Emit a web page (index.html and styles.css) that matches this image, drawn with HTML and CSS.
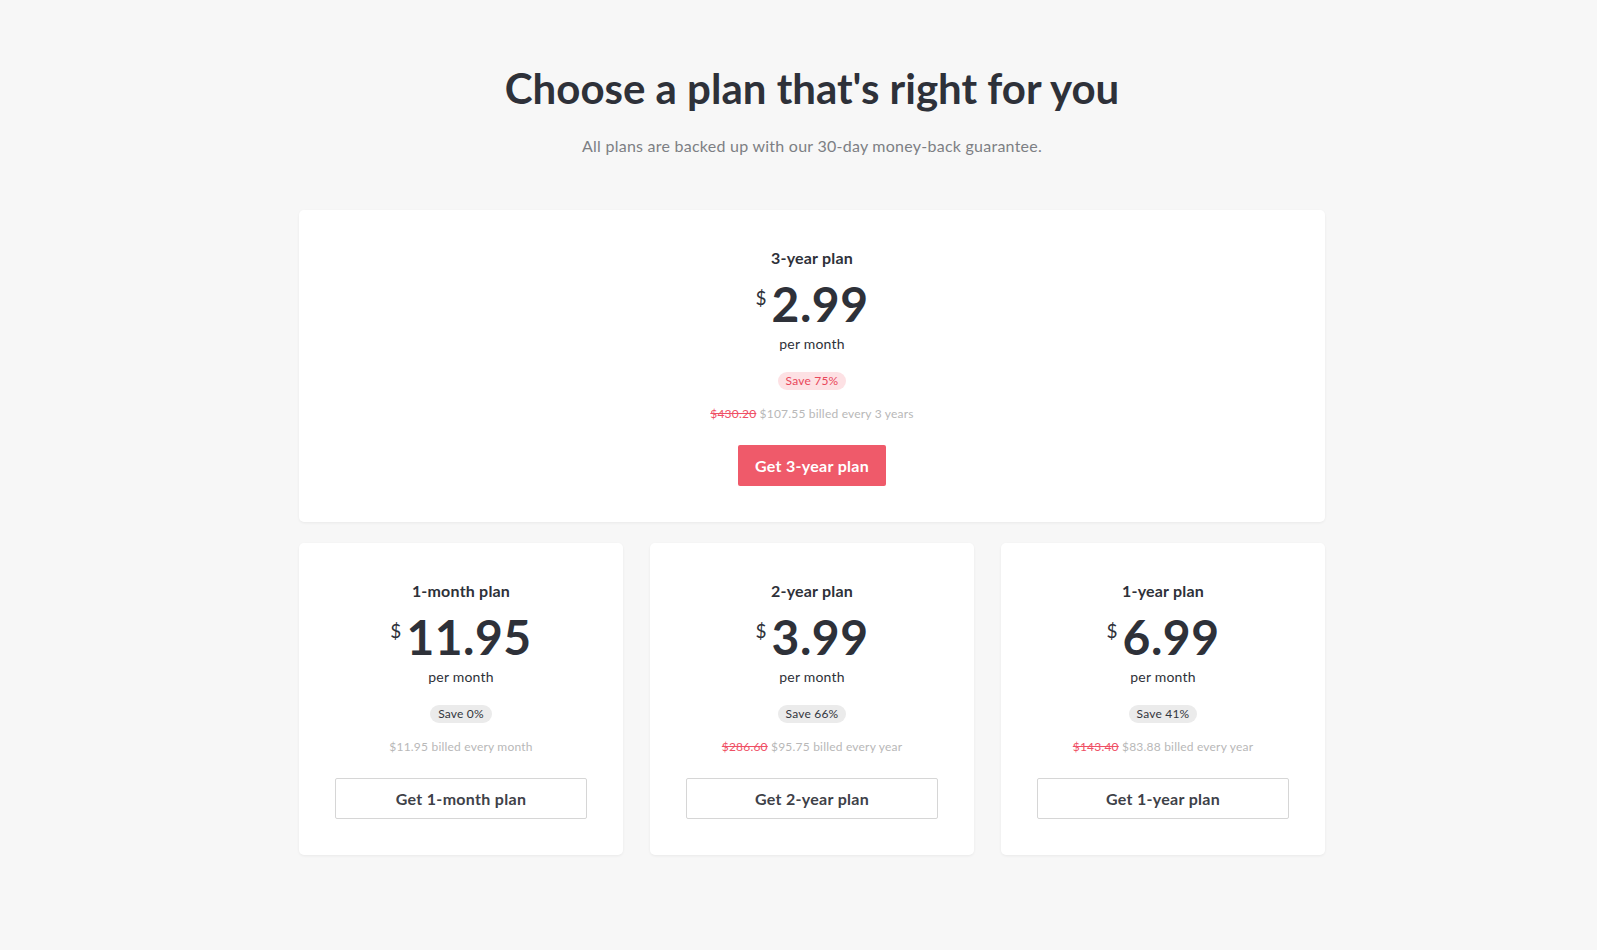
FILE: index.html
```html
<!DOCTYPE html>
<html lang="en">
<head>
    <meta charset="UTF-8">
    <meta name="viewport" content="width=device-width, initial-scale=1.0">
    <title>Choose a plan</title>
    <link rel="stylesheet" href="styles.css">
</head>
<body>
    <div class="page">
        <header class="intro">
            <h1>Choose a plan that's right for you</h1>
            <p class="subtitle">All plans are backed up with our 30-day money-back guarantee.</p>
        </header>

        <div class="plans">
            <div class="plan-card featured">
                <h3 class="plan-name">3-year plan</h3>
                <div class="price"><span class="currency">$</span>2.99</div>
                <p class="per-month">per month</p>
                <span class="badge badge-hot">Save 75%</span>
                <p class="billing"><s class="old-price">$430.20</s> $107.55 billed every 3 years</p>
                <button class="btn btn-primary">Get 3-year plan</button>
            </div>

            <div class="plan-row">
                <div class="plan-card">
                    <h3 class="plan-name">1-month plan</h3>
                    <div class="price"><span class="currency">$</span>11.95</div>
                    <p class="per-month">per month</p>
                    <span class="badge">Save 0%</span>
                    <p class="billing">$11.95 billed every month</p>
                    <button class="btn btn-outline">Get 1-month plan</button>
                </div>
                <div class="plan-card">
                    <h3 class="plan-name">2-year plan</h3>
                    <div class="price"><span class="currency">$</span>3.99</div>
                    <p class="per-month">per month</p>
                    <span class="badge">Save 66%</span>
                    <p class="billing"><s class="old-price">$286.60</s> $95.75 billed every year</p>
                    <button class="btn btn-outline">Get 2-year plan</button>
                </div>
                <div class="plan-card">
                    <h3 class="plan-name">1-year plan</h3>
                    <div class="price"><span class="currency">$</span>6.99</div>
                    <p class="per-month">per month</p>
                    <span class="badge">Save 41%</span>
                    <p class="billing"><s class="old-price">$143.40</s> $83.88 billed every year</p>
                    <button class="btn btn-outline">Get 1-year plan</button>
                </div>
            </div>
        </div>
    </div>
</body>
</html>
```

FILE: styles.css
```css
body {
    margin: 0;
    background-color: #f7f7f7;
    font-family: 'Lato', 'Noto Sans', Arial, sans-serif;
    color: #2e3139;
}
.page {
    padding: 60px 0 80px 27px;
}
.intro {
    text-align: center;
}
h1 {
    margin: 0;
    font-size: 42px;
    line-height: 56px;
    font-weight: 700;
    color: #2e3139;
}
.subtitle {
    margin: 18px 0 0;
    font-size: 16px;
    line-height: 24px;
    letter-spacing: 0.25px;
    color: #7d7f84;
}
.plans {
    width: 1026px;
    margin: 52px auto 0;
}
.plan-row {
    display: grid;
    grid-template-columns: repeat(3, 1fr);
    gap: 27px;
    margin-top: 21px;
}
.plan-card {
    background-color: #fff;
    border-radius: 5px;
    box-shadow: 0 1px 3px rgba(0, 0, 0, 0.06);
    padding: 36px;
    display: flex;
    flex-direction: column;
    align-items: center;
    text-align: center;
}
.plan-name {
    margin: 0;
    font-size: 16px;
    line-height: 24px;
    letter-spacing: 0.2px;
    font-weight: 700;
}
.price {
    margin-top: 6px;
    font-size: 48px;
    line-height: 56px;
    letter-spacing: 0.5px;
    font-weight: 700;
    display: flex;
    align-items: flex-start;
}
.currency {
    font-size: 19px;
    line-height: 19px;
    padding-top: 12px;
    font-weight: 400;
    letter-spacing: 0;
    margin-right: 5px;
}
.per-month {
    margin: 0;
    font-size: 14px;
    line-height: 24px;
    letter-spacing: 0.2px;
}
.badge {
    margin-top: 16px;
    padding: 0 8px;
    height: 18px;
    line-height: 18px;
    border-radius: 9px;
    font-size: 12px;
    letter-spacing: 0.2px;
    background-color: #ebebeb;
    color: #33363d;
}
.badge-hot {
    background-color: #fde1e4;
    color: #e9475a;
}
.billing {
    margin: 14px 0 0;
    font-size: 12px;
    line-height: 20px;
    letter-spacing: 0.2px;
    color: #b8b8b8;
}
.old-price {
    color: #ef5065;
}
.btn {
    margin-top: 21px;
    height: 41px;
    font-family: inherit;
    font-size: 16px;
    font-weight: 700;
    letter-spacing: 0.3px;
    border-radius: 2px;
    cursor: pointer;
}
.btn-primary {
    padding: 0 17px;
    background-color: #ef5a6a;
    color: #fff;
    border: none;
}
.btn-outline {
    width: 100%;
    background-color: #fff;
    color: #3e4148;
    border: 1px solid #d6d6d6;
}
```
